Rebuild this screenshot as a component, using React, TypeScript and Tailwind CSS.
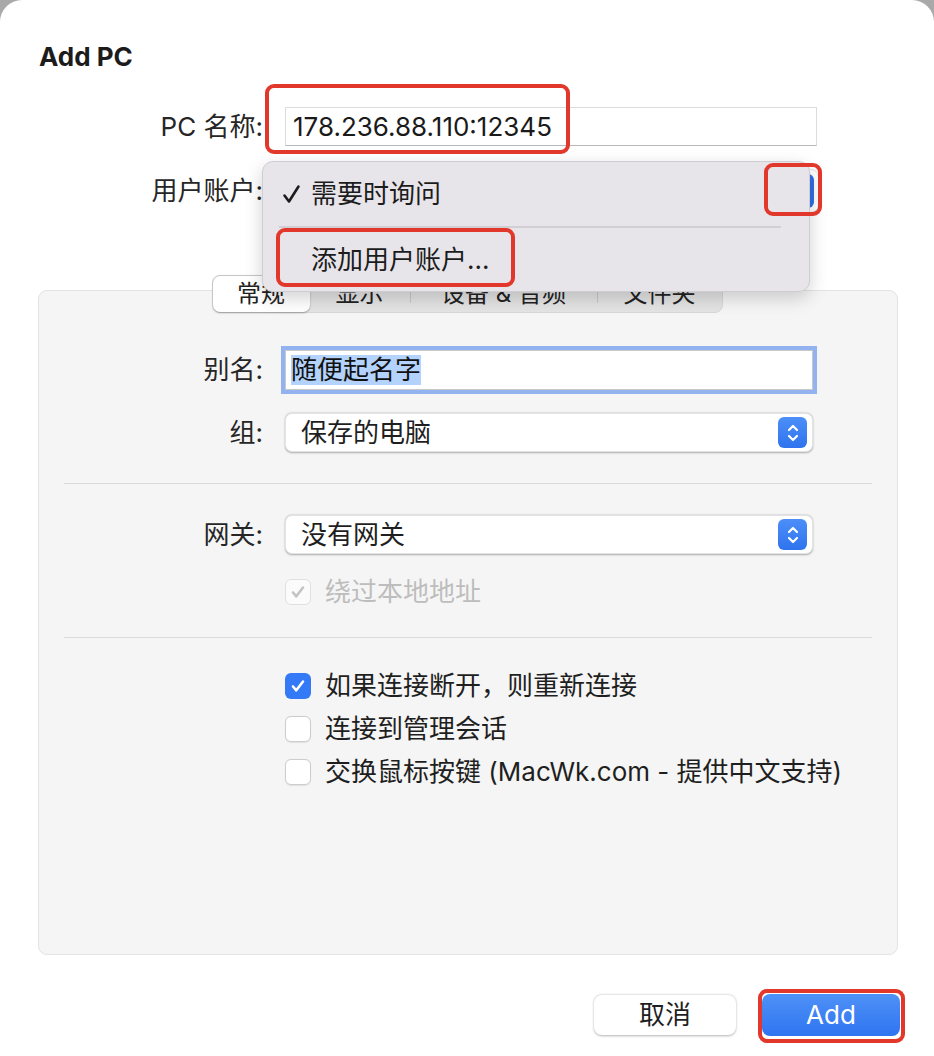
import { ReactNode } from "react"

const Stepper = () => (
  <div className="w-[29px] h-[31px] rounded-[6px] bg-gradient-to-b from-[#4c8ff8] to-[#2f73ee] flex items-center justify-center">
    <svg width="14" height="22" viewBox="0 0 14 22" fill="none" stroke="white" strokeWidth="2.2" strokeLinecap="round" strokeLinejoin="round">
      <path d="M3 8l4-4 4 4" />
      <path d="M3 14l4 4 4-4" />
    </svg>
  </div>
)

const Select = ({ value, width = "w-[528px]" }: { value: string; width?: string }) => (
  <div className={`${width} h-[39px] bg-white rounded-[7px] shadow-[0_0.5px_2px_rgba(0,0,0,0.3)] border border-[#e2e2e2] flex items-center justify-between pl-[15px] pr-[5px]`}>
    <span className="text-[26px] leading-none text-[#1f1f1f]">{value}</span>
    <Stepper />
  </div>
)

const Row = ({ label, children, h = "h-[39px]" }: { label: string; children: ReactNode; h?: string }) => (
  <div className={`flex items-center ${h}`}>
    <div className="w-[224px] text-right text-[26px] leading-none text-[#262626]">{label}</div>
    <div className="ml-[22px]">{children}</div>
  </div>
)

const Check = ({ checked, disabled, label }: { checked?: boolean; disabled?: boolean; label: string }) => (
  <div className="flex items-center h-[30px] pl-[246px]">
    {checked && !disabled ? (
      <div className="w-[26px] h-[26px] rounded-[6px] bg-[#3479f6] flex items-center justify-center">
        <svg width="16" height="16" viewBox="0 0 16 16" fill="none" stroke="white" strokeWidth="2.6" strokeLinecap="round" strokeLinejoin="round">
          <path d="M3 8.5l3.3 3.8L13 3.5" />
        </svg>
      </div>
    ) : checked ? (
      <div className="w-[26px] h-[26px] rounded-[6px] bg-[#fbfbfb] border border-[#e0e0e0] flex items-center justify-center">
        <svg width="16" height="16" viewBox="0 0 16 16" fill="none" stroke="#c3c3c3" strokeWidth="2.6" strokeLinecap="round" strokeLinejoin="round">
          <path d="M3 8.5l3.3 3.8L13 3.5" />
        </svg>
      </div>
    ) : (
      <div className="w-[26px] h-[26px] rounded-[6px] bg-white border border-[#cdcdcd] shadow-[0_0.5px_1px_rgba(0,0,0,0.08)]" />
    )}
    <span className={`ml-[14px] text-[26px] leading-none ${disabled ? "text-[#bdbdbd]" : "text-[#1f1f1f]"}`}>{label}</span>
  </div>
)

const RedBox = ({ className }: { className: string }) => (
  <div className={`absolute border-[4px] border-[#e2382c] rounded-[9px] pointer-events-none ${className}`} />
)

export default function App() {
  return (
    <div className="w-[934px] h-[1056px] bg-[#a9a9a9] font-['Inter','Noto_Sans_CJK_SC',sans-serif]">
      <div className="relative w-full h-full bg-white rounded-t-[22px] overflow-hidden flex flex-col">
        <h1 className="pt-[41px] pl-[39px] text-[26px] leading-[32px] font-bold text-[#1c1c1c]">Add PC</h1>

        <div className="mt-[34px] flex items-center h-[39px]">
          <div className="w-[263px] text-right text-[26px] leading-none text-[#262626]">PC 名称:</div>
          <div className="ml-[22px] w-[532px] h-[39px] bg-white border border-[#dcdcdc] border-b-[#b9b9b9] flex items-center pl-[7px]">
            <span className="text-[26px] leading-none text-[#1a1a1a]">178.236.88.110:12345</span>
          </div>
        </div>

        <div className="mt-[24px] flex items-center h-[42px]">
          <div className="w-[263px] text-right text-[26px] leading-none text-[#262626]">用户账户:</div>
          <div className="ml-[21px] w-[534px] h-[42px] bg-white rounded-[7px] shadow-[0_0.5px_2px_rgba(0,0,0,0.3)] flex justify-end p-[4px]">
            <div className="w-[30px] h-full rounded-[6px] bg-[#2f6fe6]" />
          </div>
        </div>

        <div className="mt-[63px] flex justify-center relative z-10 -mb-[23px]">
          <div className="flex h-[38px] bg-[#e4e4e4] rounded-[8px] border border-[#d8d8d8] text-[24px] leading-none text-[#222]">
            <div className="w-[97px] bg-white rounded-[7px] shadow-[0_0.5px_2px_rgba(0,0,0,0.3)] flex items-center justify-center">常规</div>
            <div className="w-[100px] flex items-center justify-center">显示</div>
            <div className="w-px my-[9px] bg-[#c8c8c8]" />
            <div className="w-[186px] flex items-center justify-center">设备 &amp; 音频</div>
            <div className="w-px my-[9px] bg-[#c8c8c8]" />
            <div className="w-[124px] flex items-center justify-center">文件夹</div>
          </div>
        </div>

        <div className="ml-[38px] mr-[36px] h-[665px] bg-[#f5f5f5] border border-[#e3e3e3] rounded-[9px] flex flex-col pt-[56px]">
          <Row label="别名:" h="h-[46px]">
            <div className="w-[528px] h-[40px] bg-white border border-[#c9c9c9] ring-[4px] ring-[#93b2f0] flex items-center pl-[5px]">
              <span className="text-[26px] leading-[30px] bg-[#b3d3fd] text-[#111]">随便起名字</span>
            </div>
          </Row>
          <div className="mt-[20px]">
            <Row label="组:">
              <Select value="保存的电脑" />
            </Row>
          </div>
          <div className="mt-[31px] ml-[25px] mr-[25px] h-px bg-[#dadada]" />
          <div className="mt-[31px]">
            <Row label="网关:">
              <Select value="没有网关" />
            </Row>
          </div>
          <div className="mt-[23px]">
            <Check checked disabled label="绕过本地地址" />
          </div>
          <div className="mt-[30px] ml-[25px] mr-[25px] h-px bg-[#dadada]" />
          <div className="mt-[33px] flex flex-col gap-[13px]">
            <Check checked label="如果连接断开，则重新连接" />
            <Check label="连接到管理会话" />
            <Check label="交换鼠标按键 (MacWk.com - 提供中文支持)" />
          </div>
        </div>

        <div className="mt-[39px] flex justify-end items-center gap-[26px] pr-[34px]">
          <button className="w-[142px] h-[40px] bg-white rounded-[8px] shadow-[0_0.5px_2.5px_rgba(0,0,0,0.3)] text-[26px] leading-none text-[#1f1f1f]">取消</button>
          <button className="w-[138px] h-[42px] rounded-[8px] bg-gradient-to-b from-[#4e91f8] to-[#2f74f0] text-[26px] leading-none text-white">Add</button>
        </div>

        {/* popup menu open over the account select */}
        <div className="absolute left-[262px] top-[161px] w-[548px] h-[131px] bg-[#e8e5ea] rounded-[11px] border border-[#cfcdd1] shadow-[0_6px_18px_rgba(0,0,0,0.18)] flex flex-col z-20">
          <div className="h-[64px] flex items-center pl-[19px] text-[26px] leading-none text-[#1c1c1c]">
            <svg width="19" height="20" viewBox="0 0 19 20" fill="none" stroke="#1c1c1c" strokeWidth="2.6" strokeLinecap="round" strokeLinejoin="round" className="mr-[10px]">
              <path d="M2.5 11.5l4.5 6L16.5 2.5" />
            </svg>
            <span>需要时询问</span>
          </div>
          <div className="ml-[16px] mr-[28px] h-[2px] bg-[#d2cfd4]" />
          <div className="flex-1 flex items-center pl-[48px] text-[26px] leading-none text-[#1c1c1c]">添加用户账户...</div>
        </div>

        <RedBox className="left-[265px] top-[84px] w-[305px] h-[70px] z-30" />
        <RedBox className="left-[764px] top-[163px] w-[58px] h-[53px] z-30" />
        <RedBox className="left-[276px] top-[228px] w-[239px] h-[59px] z-30" />
        <RedBox className="left-[758px] top-[989px] w-[147px] h-[54px] z-30" />
      </div>
    </div>
  )
}
